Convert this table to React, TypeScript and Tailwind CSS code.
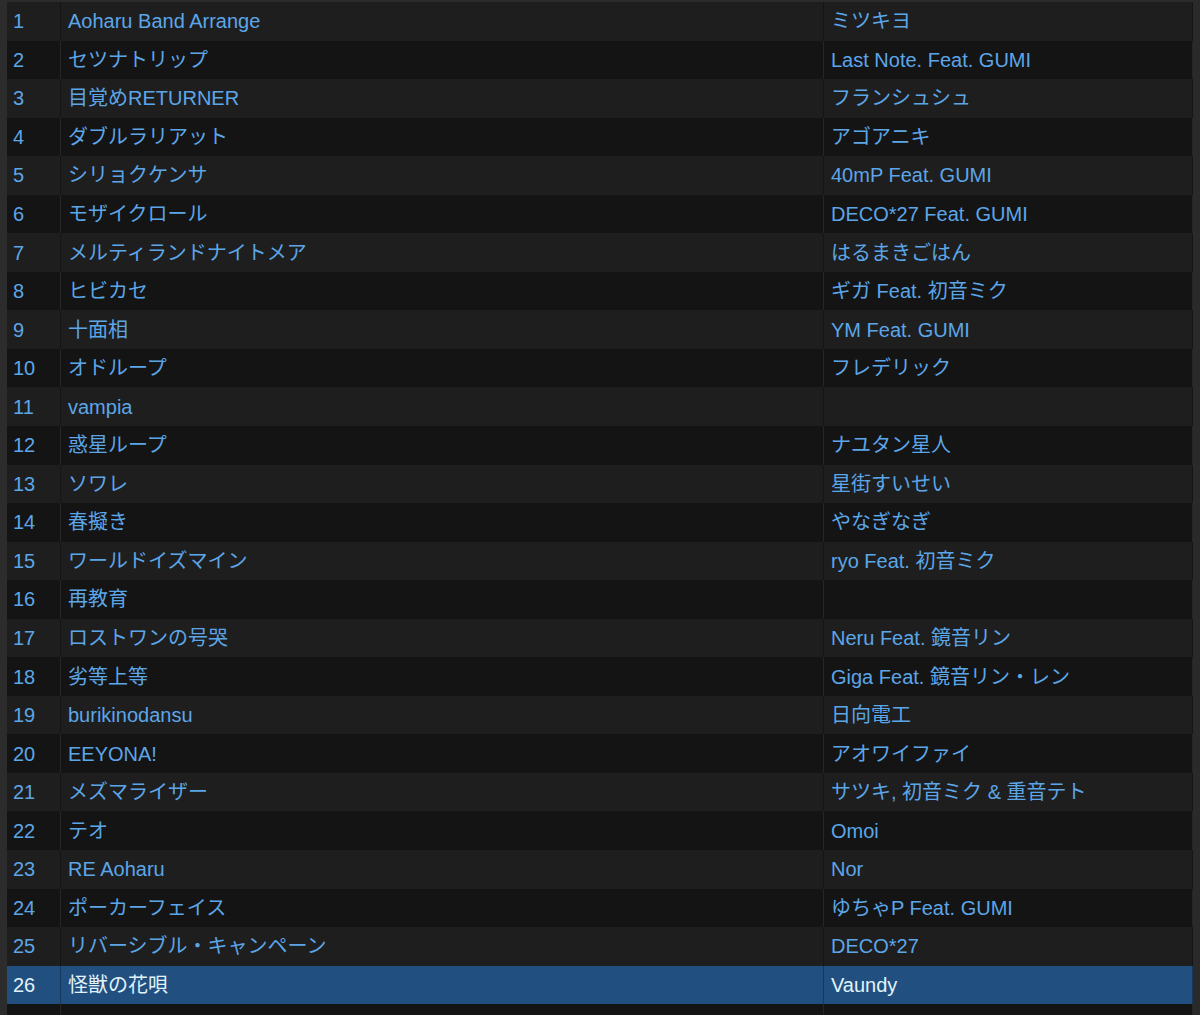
import React from "react";

const rows: [string, string][] = [
  ["Aoharu Band Arrange", "ミツキヨ"],
  ["セツナトリップ", "Last Note. Feat. GUMI"],
  ["目覚めRETURNER", "フランシュシュ"],
  ["ダブルラリアット", "アゴアニキ"],
  ["シリョクケンサ", "40mP Feat. GUMI"],
  ["モザイクロール", "DECO*27 Feat. GUMI"],
  ["メルティランドナイトメア", "はるまきごはん"],
  ["ヒビカセ", "ギガ Feat. 初音ミク"],
  ["十面相", "YM Feat. GUMI"],
  ["オドループ", "フレデリック"],
  ["vampia", ""],
  ["惑星ループ", "ナユタン星人"],
  ["ソワレ", "星街すいせい"],
  ["春擬き", "やなぎなぎ"],
  ["ワールドイズマイン", "ryo Feat. 初音ミク"],
  ["再教育", ""],
  ["ロストワンの号哭", "Neru Feat. 鏡音リン"],
  ["劣等上等", "Giga Feat. 鏡音リン・レン"],
  ["burikinodansu", "日向電工"],
  ["EEYONA!", "アオワイファイ"],
  ["メズマライザー", "サツキ, 初音ミク & 重音テト"],
  ["テオ", "Omoi"],
  ["RE Aoharu", "Nor"],
  ["ポーカーフェイス", "ゆちゃP Feat. GUMI"],
  ["リバーシブル・キャンペーン", "DECO*27"],
  ["怪獣の花唄", "Vaundy"],
];

const Row = ({ n, title, artist }: { n: number; title: string; artist: string }) => {
  const selected = n === 26;
  const bg = selected ? "bg-[#215080]" : n % 2 === 1 ? "bg-[#1e1e1e]" : "bg-[#141414]";
  const text = selected ? "text-[#e2f3fb]" : "text-[#5ca6e8]";
  const line = selected ? "border-[#17385a]" : n % 2 === 1 ? "border-[#151515]" : "border-[#262626]";
  return (
    <div className={`flex h-[38.56px] shrink-0 items-center ${bg} ${text}`}>
      <div className={`w-[54px] h-full flex items-center pl-[6px] border-r ${line}`}>{n}</div>
      <div className={`w-[763px] h-full flex items-center pl-[7px] border-r ${line} whitespace-nowrap`}>{title}</div>
      <div className={`flex-1 h-full flex items-center pl-[7px] border-r ${line} whitespace-nowrap`}>{artist}</div>
    </div>
  );
};

export default function App() {
  return (
    <div
      className="w-[1200px] h-[1015px] bg-[#2b2b2b] flex overflow-hidden text-[20px] leading-none"
      style={{ fontFamily: '"Liberation Sans", "Noto Sans CJK JP", sans-serif' }}
    >
      <div className="w-[7px] shrink-0 bg-[#2c2c2c]" />
      <div className="flex-1 flex flex-col pt-[2px]">
        {rows.map(([t, a], i) => (
          <Row key={i} n={i + 1} title={t} artist={a} />
        ))}
        <div className="flex flex-1 bg-[#141414]">
          <div className="w-[54px] border-r border-[#262626]" />
          <div className="w-[763px] border-r border-[#262626]" />
          <div className="flex-1 border-r border-[#262626]" />
        </div>
      </div>
      <div className="w-[7px] shrink-0 bg-[#2a2a2a]" />
    </div>
  );
}
